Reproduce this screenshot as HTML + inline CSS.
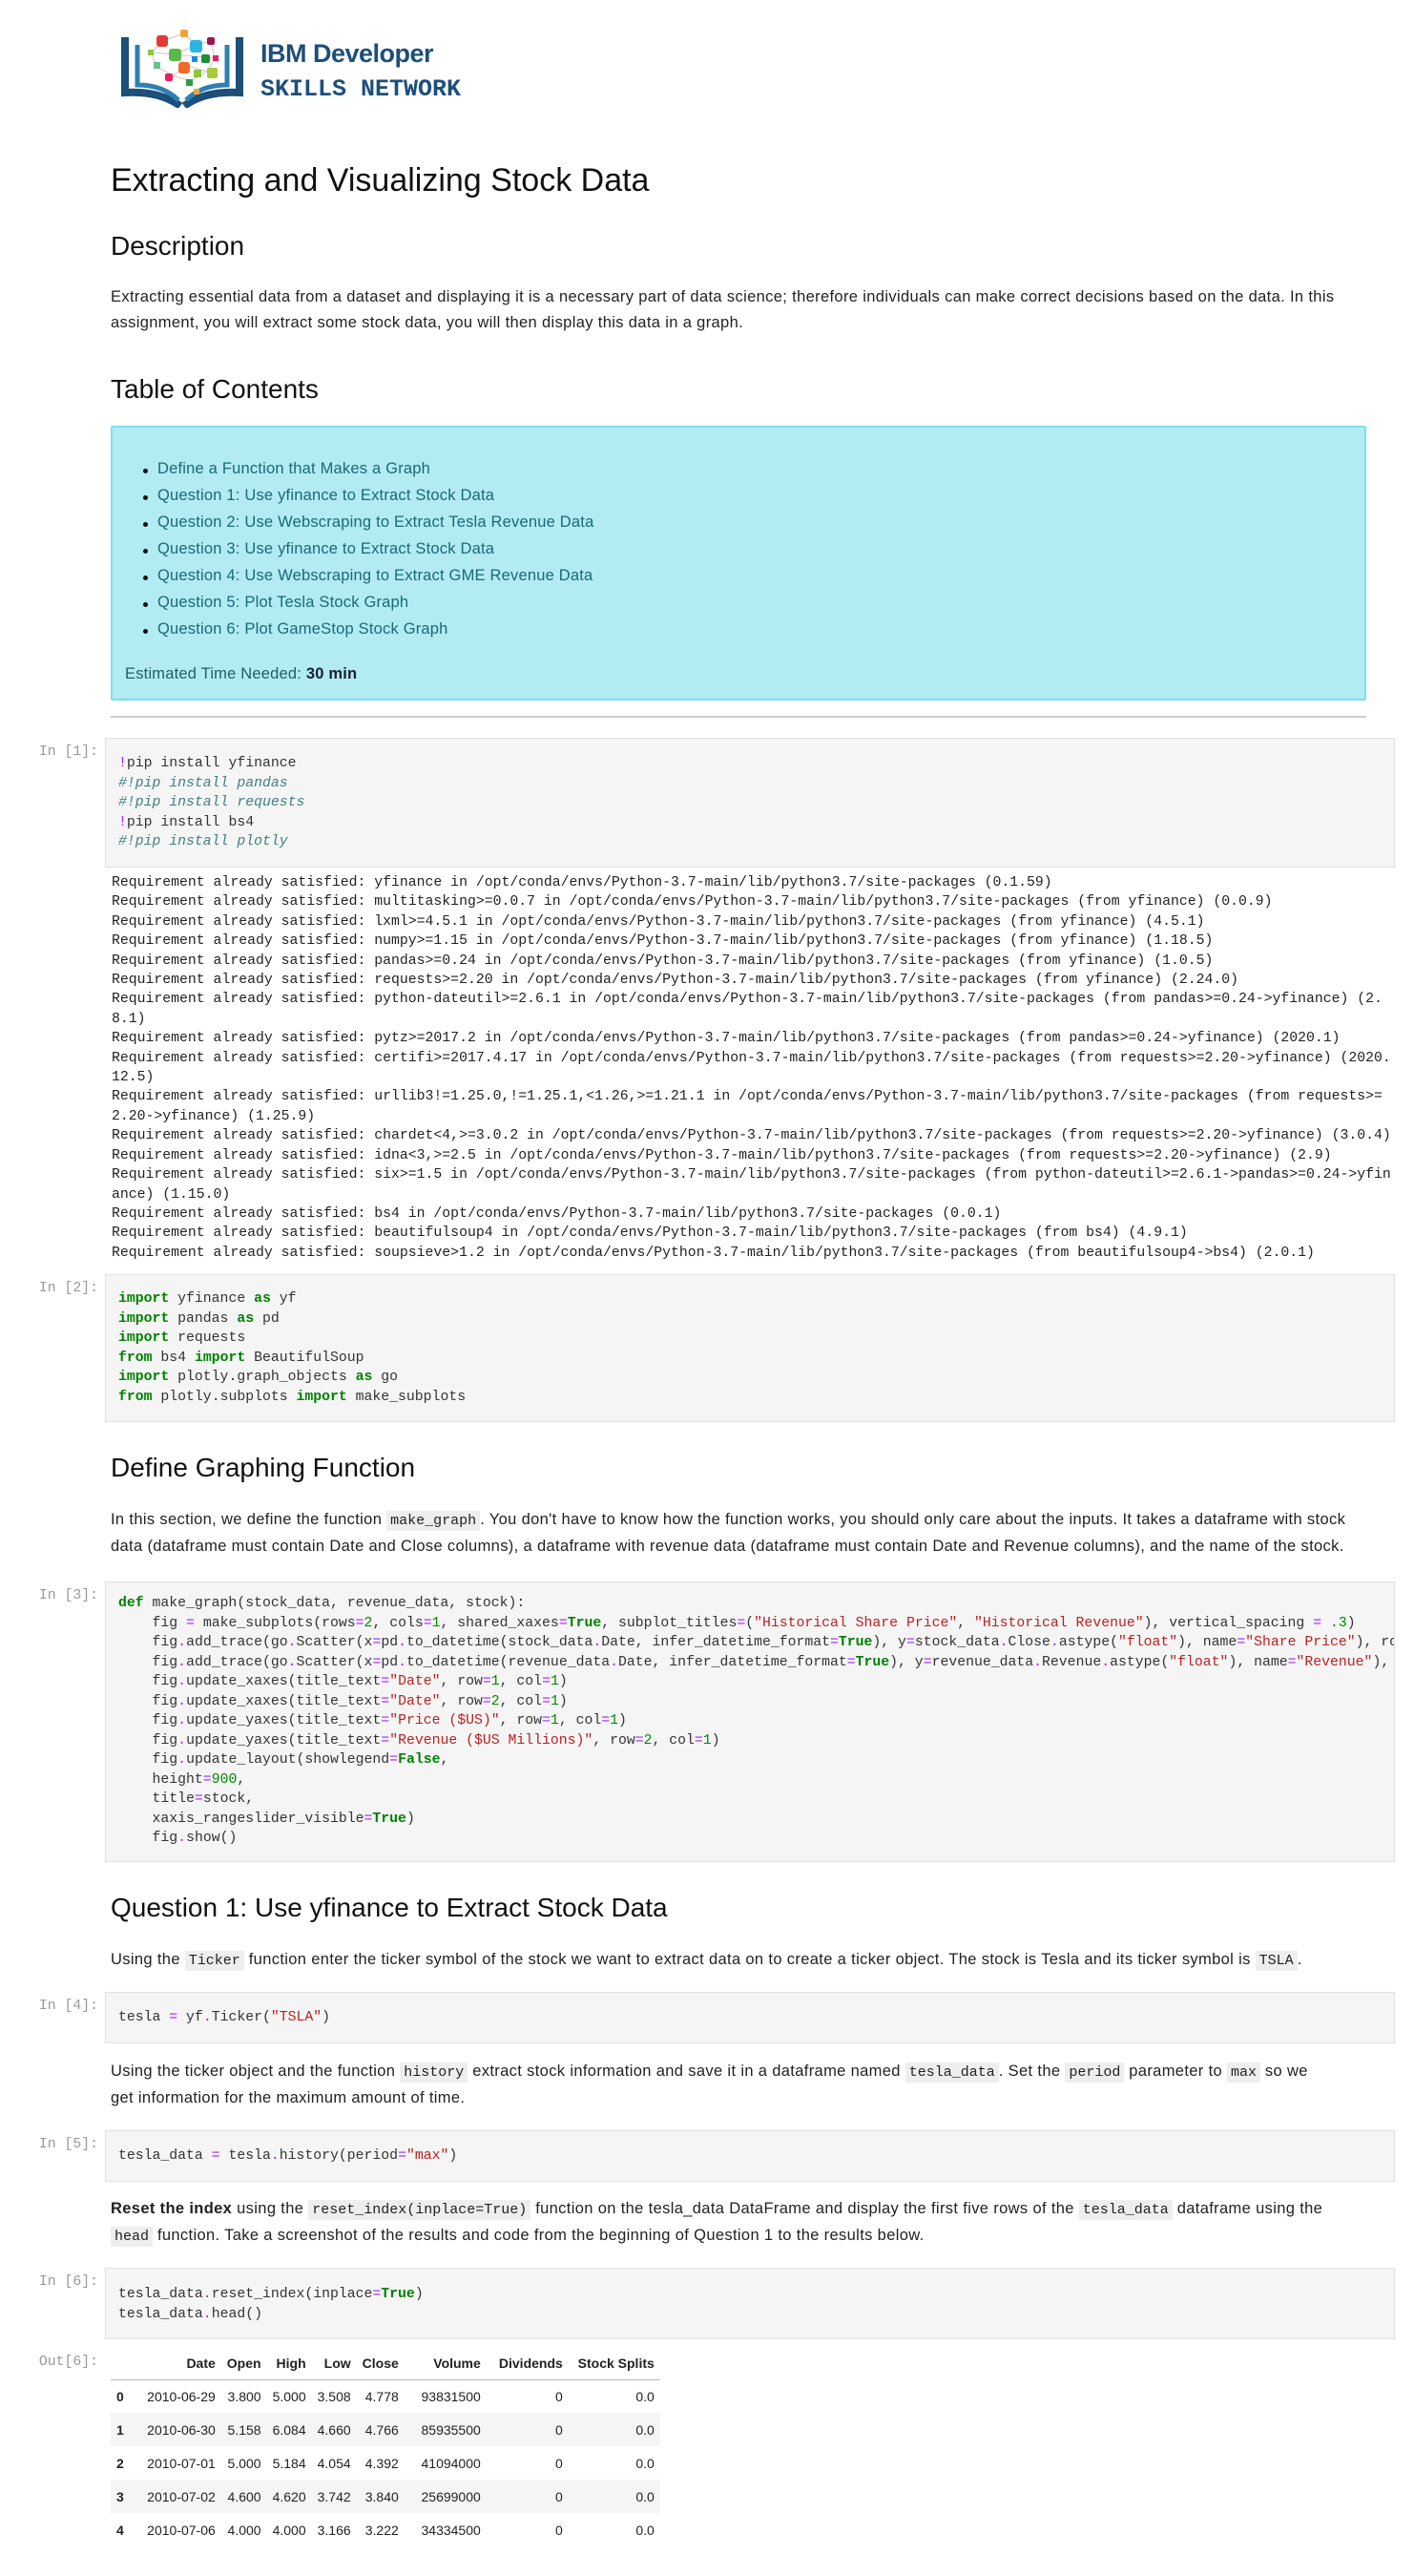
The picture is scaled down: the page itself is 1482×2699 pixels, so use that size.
<!DOCTYPE html>
<html><head><meta charset="utf-8"><style>
*{margin:0;padding:0;box-sizing:border-box}
body{width:1482px;height:2699px;position:relative;background:#fff;font-family:"Liberation Sans",sans-serif;color:#000;overflow:hidden}
.a{position:absolute;white-space:nowrap}
h1{position:absolute;left:116px;font-size:34px;font-weight:normal;line-height:40px;color:#111}
h2{position:absolute;left:116px;font-size:28px;font-weight:normal;line-height:34px;color:#111}
.p{position:absolute;left:116px;font-size:16.5px;letter-spacing:.35px;line-height:27px;color:#222;white-space:nowrap}
.cell{position:absolute;left:110px;width:1352px;background:#f5f5f5;border:1px solid #e0e0e0;overflow:hidden;font-family:"Liberation Mono",monospace;font-size:14.8px;line-height:20.5px;color:#333;padding:0 0 0 13px;white-space:pre}
.pr{position:absolute;width:95px;text-align:right;font-family:"Liberation Mono",monospace;font-size:14.8px;color:#999;left:8px}
.out{position:absolute;left:117px;font-family:"Liberation Mono",monospace;font-size:14.8px;line-height:20.4px;color:#222;white-space:pre}
.k{color:#008000;font-weight:bold}.s{color:#ba2121}.n{color:#080}.o{color:#a2f}.c{color:#408080;font-style:italic}
code{font-family:"Liberation Mono",monospace;background:#eee;padding:2px 4px;font-size:15px;letter-spacing:0}
.toc{position:absolute;left:116px;top:446px;width:1316px;height:288px;background:#b2ebf2;border:2px solid #80deea;border-radius:2px}
.toc .li{position:absolute;left:47px;font-size:16.5px;color:#1b6a73;white-space:nowrap;letter-spacing:.2px}
.toc .li:before{content:"";position:absolute;left:-15px;top:9px;width:5px;height:5px;border-radius:50%;background:#111}
.toc .est{position:absolute;left:13px;top:249px;font-size:16.5px;color:#1f5f66;white-space:nowrap;letter-spacing:.2px}
table{position:absolute;left:116px;top:2460px;border-collapse:collapse;font-size:14px;color:#222}
th,td{text-align:right;padding:0 6px;height:35px}
th{font-weight:bold;border-bottom:1px solid #bbb;height:33px}
tr.z td{background:#f5f5f5}
</style></head><body>

<svg class="a" style="left:125px;top:29px" width="360" height="84" viewBox="0 0 360 84">
<g fill="none" stroke-linecap="butt">
<path d="M6 10 V68 Q42 66 64 82" stroke="#1c4f79" stroke-width="8"/>
<path d="M19 18 V60 Q46 60 62 76" stroke="#2f7fb0" stroke-width="5"/>
<path d="M126 10 V68 Q90 66 68 82" stroke="#1c4f79" stroke-width="8"/>
<path d="M113 18 V60 Q86 60 70 76" stroke="#2f7fb0" stroke-width="5"/>
</g>
<g stroke="#c8c8c8" stroke-width="1" fill="none"><path d="M45 14 L68 6 L80 18 L96 14 L100 32 L92 46 L74 56 L56 50 L38 40 L34 26 L45 14 M58 28 L80 18 M58 28 L72 40 L92 46 M72 40 L56 50 M34 26 L58 28 L100 32"/></g>
<rect x="39" y="8" width="12" height="12" rx="3" fill="#e53935"/><rect x="64" y="2" width="8" height="8" rx="2" fill="#f4a236"/>
<rect x="74" y="13" width="13" height="13" rx="3" fill="#2ab6e0"/><rect x="92" y="10" width="8" height="8" rx="2" fill="#a0154d"/>
<rect x="52" y="22" width="13" height="13" rx="3" fill="#58b947"/><rect x="30" y="23" width="6" height="6" fill="#8cc63e"/>
<rect x="86" y="28" width="9" height="9" rx="2" fill="#1f8e3c"/><rect x="98" y="29" width="6" height="6" fill="#e91e63"/>
<rect x="62" y="36" width="12" height="12" rx="3" fill="#f26a2c"/><rect x="36" y="36" width="7" height="7" fill="#68c08e"/>
<rect x="78" y="44" width="8" height="8" fill="#8cc63e"/><rect x="92" y="42" width="11" height="11" rx="2" fill="#a5cd39"/>
<rect x="48" y="48" width="8" height="8" rx="2" fill="#e91e63"/><rect x="70" y="54" width="7" height="7" fill="#2e9d4a"/>
<rect x="76" y="30" width="6" height="6" fill="#1e88e5"/><rect x="78" y="64" width="6" height="6" fill="#f4a236"/>
<text x="148" y="36" font-family="Liberation Sans,sans-serif" font-size="27" font-weight="bold" fill="#1d4f7a" letter-spacing="-0.5">IBM Developer</text>
<text x="148" y="71" font-family="Liberation Mono,monospace" font-size="25" font-weight="bold" fill="#1d4f7a">SKILLS NETWORK</text>
</svg>

<h1 style="top:169px">Extracting and Visualizing Stock Data</h1>
<h2 style="top:241px">Description</h2>
<div class="p" style="top:298px">Extracting essential data from a dataset and displaying it is a necessary part of data science; therefore individuals can make correct decisions based on the data. In this<br>assignment, you will extract some stock data, you will then display this data in a graph.</div>
<h2 style="top:391px">Table of Contents</h2>
<div class="toc">
<div class="li" style="top:34px">Define a Function that Makes a Graph</div>
<div class="li" style="top:62px">Question 1: Use yfinance to Extract Stock Data</div>
<div class="li" style="top:90px">Question 2: Use Webscraping to Extract Tesla Revenue Data</div>
<div class="li" style="top:118px">Question 3: Use yfinance to Extract Stock Data</div>
<div class="li" style="top:146px">Question 4: Use Webscraping to Extract GME Revenue Data</div>
<div class="li" style="top:174px">Question 5: Plot Tesla Stock Graph</div>
<div class="li" style="top:202px">Question 6: Plot GameStop Stock Graph</div>
<div class="est">Estimated Time Needed: <b style="color:#123">30 min</b></div>
</div>
<div class="a" style="left:116px;top:750px;width:1316px;height:2px;background:#ccc"></div>

<div class="pr" style="top:780px">In [1]:</div>
<div class="cell" style="top:773px;height:136px;padding-top:16px"><span class="o">!</span>pip install yfinance
<span class="c">#!pip install pandas</span>
<span class="c">#!pip install requests</span>
<span class="o">!</span>pip install bs4
<span class="c">#!pip install plotly</span></div>
<div class="out" style="top:915px">Requirement already satisfied: yfinance in /opt/conda/envs/Python-3.7-main/lib/python3.7/site-packages (0.1.59)
Requirement already satisfied: multitasking&gt;=0.0.7 in /opt/conda/envs/Python-3.7-main/lib/python3.7/site-packages (from yfinance) (0.0.9)
Requirement already satisfied: lxml&gt;=4.5.1 in /opt/conda/envs/Python-3.7-main/lib/python3.7/site-packages (from yfinance) (4.5.1)
Requirement already satisfied: numpy&gt;=1.15 in /opt/conda/envs/Python-3.7-main/lib/python3.7/site-packages (from yfinance) (1.18.5)
Requirement already satisfied: pandas&gt;=0.24 in /opt/conda/envs/Python-3.7-main/lib/python3.7/site-packages (from yfinance) (1.0.5)
Requirement already satisfied: requests&gt;=2.20 in /opt/conda/envs/Python-3.7-main/lib/python3.7/site-packages (from yfinance) (2.24.0)
Requirement already satisfied: python-dateutil&gt;=2.6.1 in /opt/conda/envs/Python-3.7-main/lib/python3.7/site-packages (from pandas&gt;=0.24-&gt;yfinance) (2.
8.1)
Requirement already satisfied: pytz&gt;=2017.2 in /opt/conda/envs/Python-3.7-main/lib/python3.7/site-packages (from pandas&gt;=0.24-&gt;yfinance) (2020.1)
Requirement already satisfied: certifi&gt;=2017.4.17 in /opt/conda/envs/Python-3.7-main/lib/python3.7/site-packages (from requests&gt;=2.20-&gt;yfinance) (2020.
12.5)
Requirement already satisfied: urllib3!=1.25.0,!=1.25.1,&lt;1.26,&gt;=1.21.1 in /opt/conda/envs/Python-3.7-main/lib/python3.7/site-packages (from requests&gt;=
2.20-&gt;yfinance) (1.25.9)
Requirement already satisfied: chardet&lt;4,&gt;=3.0.2 in /opt/conda/envs/Python-3.7-main/lib/python3.7/site-packages (from requests&gt;=2.20-&gt;yfinance) (3.0.4)
Requirement already satisfied: idna&lt;3,&gt;=2.5 in /opt/conda/envs/Python-3.7-main/lib/python3.7/site-packages (from requests&gt;=2.20-&gt;yfinance) (2.9)
Requirement already satisfied: six&gt;=1.5 in /opt/conda/envs/Python-3.7-main/lib/python3.7/site-packages (from python-dateutil&gt;=2.6.1-&gt;pandas&gt;=0.24-&gt;yfin
ance) (1.15.0)
Requirement already satisfied: bs4 in /opt/conda/envs/Python-3.7-main/lib/python3.7/site-packages (0.0.1)
Requirement already satisfied: beautifulsoup4 in /opt/conda/envs/Python-3.7-main/lib/python3.7/site-packages (from bs4) (4.9.1)
Requirement already satisfied: soupsieve&gt;1.2 in /opt/conda/envs/Python-3.7-main/lib/python3.7/site-packages (from beautifulsoup4-&gt;bs4) (2.0.1)</div>

<div class="pr" style="top:1342px">In [2]:</div>
<div class="cell" style="top:1335px;height:155px;padding-top:15px"><span class="k">import</span> yfinance <span class="k">as</span> yf
<span class="k">import</span> pandas <span class="k">as</span> pd
<span class="k">import</span> requests
<span class="k">from</span> bs4 <span class="k">import</span> BeautifulSoup
<span class="k">import</span> plotly.graph_objects <span class="k">as</span> go
<span class="k">from</span> plotly.subplots <span class="k">import</span> make_subplots</div>

<h2 style="top:1521px">Define Graphing Function</h2>
<div class="p" style="top:1579px">In this section, we define the function <code>make_graph</code>. You don't have to know how the function works, you should only care about the inputs. It takes a dataframe with stock<br>data (dataframe must contain Date and Close columns), a dataframe with revenue data (dataframe must contain Date and Revenue columns), and the name of the stock.</div>

<div class="pr" style="top:1664px">In [3]:</div>
<div class="cell" style="top:1657px;height:294px;padding-top:12px"><span class="k">def</span> make_graph(stock_data, revenue_data, stock):
    fig <span class="o">=</span> make_subplots(rows<span class="o">=</span><span class="n">2</span>, cols<span class="o">=</span><span class="n">1</span>, shared_xaxes<span class="o">=</span><span class="k">True</span>, subplot_titles<span class="o">=</span>(<span class="s">"Historical Share Price"</span>, <span class="s">"Historical Revenue"</span>), vertical_spacing <span class="o">=</span> <span class="n">.3</span>)
    fig<span class="o">.</span>add_trace(go<span class="o">.</span>Scatter(x<span class="o">=</span>pd<span class="o">.</span>to_datetime(stock_data<span class="o">.</span>Date, infer_datetime_format<span class="o">=</span><span class="k">True</span>), y<span class="o">=</span>stock_data<span class="o">.</span>Close<span class="o">.</span>astype(<span class="s">"float"</span>), name<span class="o">=</span><span class="s">"Share Price"</span>), row<span class="o">=</span><span class="n">1</span>, col<span class="o">=</span><span class="n">1</span>)
    fig<span class="o">.</span>add_trace(go<span class="o">.</span>Scatter(x<span class="o">=</span>pd<span class="o">.</span>to_datetime(revenue_data<span class="o">.</span>Date, infer_datetime_format<span class="o">=</span><span class="k">True</span>), y<span class="o">=</span>revenue_data<span class="o">.</span>Revenue<span class="o">.</span>astype(<span class="s">"float"</span>), name<span class="o">=</span><span class="s">"Revenue"</span>), row<span class="o">=</span><span class="n">2</span>)
    fig<span class="o">.</span>update_xaxes(title_text<span class="o">=</span><span class="s">"Date"</span>, row<span class="o">=</span><span class="n">1</span>, col<span class="o">=</span><span class="n">1</span>)
    fig<span class="o">.</span>update_xaxes(title_text<span class="o">=</span><span class="s">"Date"</span>, row<span class="o">=</span><span class="n">2</span>, col<span class="o">=</span><span class="n">1</span>)
    fig<span class="o">.</span>update_yaxes(title_text<span class="o">=</span><span class="s">"Price ($US)"</span>, row<span class="o">=</span><span class="n">1</span>, col<span class="o">=</span><span class="n">1</span>)
    fig<span class="o">.</span>update_yaxes(title_text<span class="o">=</span><span class="s">"Revenue ($US Millions)"</span>, row<span class="o">=</span><span class="n">2</span>, col<span class="o">=</span><span class="n">1</span>)
    fig<span class="o">.</span>update_layout(showlegend<span class="o">=</span><span class="k">False</span>,
    height<span class="o">=</span><span class="n">900</span>,
    title<span class="o">=</span>stock,
    xaxis_rangeslider_visible<span class="o">=</span><span class="k">True</span>)
    fig<span class="o">.</span>show()</div>

<h2 style="top:1982px">Question 1: Use yfinance to Extract Stock Data</h2>
<div class="p" style="top:2040px">Using the <code>Ticker</code> function enter the ticker symbol of the stock we want to extract data on to create a ticker object. The stock is Tesla and its ticker symbol is <code>TSLA</code>.</div>

<div class="pr" style="top:2094px">In [4]:</div>
<div class="cell" style="top:2087px;height:54px;padding-top:16px">tesla <span class="o">=</span> yf<span class="o">.</span>Ticker(<span class="s">"TSLA"</span>)</div>

<div class="p" style="top:2157px">Using the ticker object and the function <code>history</code> extract stock information and save it in a dataframe named <code>tesla_data</code>. Set the <code>period</code> parameter to <code>max</code> so we<br>get information for the maximum amount of time.</div>

<div class="pr" style="top:2239px">In [5]:</div>
<div class="cell" style="top:2232px;height:54px;padding-top:16px">tesla_data <span class="o">=</span> tesla<span class="o">.</span>history(period<span class="o">=</span><span class="s">"max"</span>)</div>

<div class="p" style="top:2301px"><b>Reset the index</b> using the <code>reset_index(inplace=True)</code> function on the tesla_data DataFrame and display the first five rows of the <code>tesla_data</code> dataframe using the<br><code>head</code> function. Take a screenshot of the results and code from the beginning of Question 1 to the results below.</div>

<div class="pr" style="top:2383px">In [6]:</div>
<div class="cell" style="top:2376px;height:75px;padding-top:17px">tesla_data<span class="o">.</span>reset_index(inplace<span class="o">=</span><span class="k">True</span>)
tesla_data<span class="o">.</span>head()</div>

<div class="pr" style="top:2467px">Out[6]:</div>
<table>
<tr><th></th><th style="width:96px">Date</th><th>Open</th><th>High</th><th>Low</th><th>Close</th><th style="width:86px">Volume</th><th style="width:86px">Dividends</th><th style="width:96px">Stock Splits</th></tr>
<tr><th style="border:0">0</th><td>2010-06-29</td><td>3.800</td><td>5.000</td><td>3.508</td><td>4.778</td><td>93831500</td><td>0</td><td>0.0</td></tr>
<tr class="z"><th style="border:0;background:#f5f5f5">1</th><td>2010-06-30</td><td>5.158</td><td>6.084</td><td>4.660</td><td>4.766</td><td>85935500</td><td>0</td><td>0.0</td></tr>
<tr><th style="border:0">2</th><td>2010-07-01</td><td>5.000</td><td>5.184</td><td>4.054</td><td>4.392</td><td>41094000</td><td>0</td><td>0.0</td></tr>
<tr class="z"><th style="border:0;background:#f5f5f5">3</th><td>2010-07-02</td><td>4.600</td><td>4.620</td><td>3.742</td><td>3.840</td><td>25699000</td><td>0</td><td>0.0</td></tr>
<tr><th style="border:0">4</th><td>2010-07-06</td><td>4.000</td><td>4.000</td><td>3.166</td><td>3.222</td><td>34334500</td><td>0</td><td>0.0</td></tr>
</table>
</body></html>
